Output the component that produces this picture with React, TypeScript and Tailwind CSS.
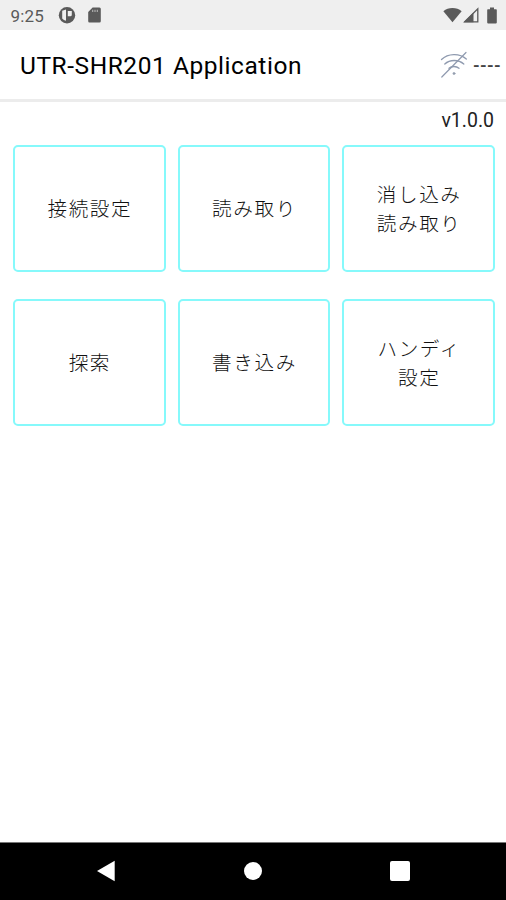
import React from 'react';

interface MenuItem {
  id: string;
  lines: string[];
}

const menuItems: MenuItem[] = [
  { id: 'connection', lines: ['接続設定'] },
  { id: 'read', lines: ['読み取り'] },
  { id: 'check-read', lines: ['消し込み', '読み取り'] },
  { id: 'search', lines: ['探索'] },
  { id: 'write', lines: ['書き込み'] },
  { id: 'handy', lines: ['ハンディ', '設定'] },
];

const StatusBar: React.FC = () => (
  <div className="flex h-[30px] shrink-0 items-center justify-between bg-[#efefef] pl-[10.5px] pr-[9px] text-[#5a5a5a]">
    <div className="flex items-center">
      <span className="w-[47px] pt-[2px] text-[17px] leading-none tracking-[0.2px]">9:25</span>
      <svg className="h-[18px] w-[18px]" viewBox="0 0 18 18">
        <circle cx="9" cy="9.3" r="8.2" fill="#5a5a5a" />
        <path d="M4.2 4.8L8 3.6v11.2a6 6 0 0 1-3.8-2.3z" fill="#efefef" />
        <path d="M9.8 5h4v3.8a1.5 1.5 0 0 1-1.5 1.5H9.8z" fill="#efefef" />
      </svg>
      <svg className="ml-[12px] h-[16px] w-[13px]" viewBox="0 0 13 16">
        <path
          d="M4.6.5h6.8A1.4 1.4 0 0 1 12.8 2v12a1.4 1.4 0 0 1-1.4 1.5H1.6A1.4 1.4 0 0 1 .2 14V5z"
          fill="#5a5a5a"
        />
        <path d="M4.7 2.8v2.2M7 2.8v2.2M9.3 2.8v2.2" stroke="#b4b4b4" strokeWidth="1.1" />
      </svg>
    </div>
    <div className="flex items-center">
      <svg className="h-[16px] w-[19px]" viewBox="0 0 20 16">
        <path d="M.4 4.1C3 1.8 6.3.7 10 .7s7 1.1 9.6 3.4L10 15.5z" fill="#5a5a5a" />
      </svg>
      <svg className="ml-[1px] h-[16px] w-[16px]" viewBox="0 0 16 16">
        <path d="M1.7 14.8L14.8 1.7v13.1z" fill="none" stroke="#5a5a5a" strokeWidth="1.3" />
        <path d="M.8 15.3L10.5 5.6v9.7z" fill="#5a5a5a" />
      </svg>
      <svg className="ml-[8px] h-[17px] w-[10px]" viewBox="0 0 10 17">
        <path d="M3 .5h4v1.8h2.1q.7 0 .7.7v12.6q0 .8-.7.8H.9q-.7 0-.7-.8V3q0-.7.7-.7H3z" fill="#5a5a5a" />
      </svg>
    </div>
  </div>
);

const DisconnectedIcon: React.FC = () => (
  <svg className="h-[28px] w-[28px]" viewBox="0 0 28 28" fill="none" stroke="#8f9aaf" strokeLinecap="round">
    <path d="M1.5 8.5C8 2.3 19.5 1.8 26.3 8" strokeWidth="1.3" />
    <path d="M4.8 13C9.8 8.3 18.5 8.3 23.8 13" strokeWidth="1.3" />
    <path d="M9 17.3C11.500 14.900 16.300 14.900 19 17.3" strokeWidth="1.3" />
    <path d="M1.8 26L26 1.5" strokeWidth="1.2" />
    <circle cx="14" cy="22.5" r="1.1" fill="#9aa1ae" strokeWidth="0.6" />
  </svg>
);

const MenuButton: React.FC<{ item: MenuItem }> = ({ item }) => (
  <button className="flex h-[127px] flex-col items-center justify-center rounded-[5px] border-2 border-[#86f9fb] bg-white pl-[1px] pt-[4px] text-[19.6px] font-light leading-[28.5px] tracking-[1.6px] text-[#111]">
    {item.lines.map((line) => (
      <span key={line}>{line}</span>
    ))}
  </button>
);

const NavigationBar: React.FC = () => (
  <nav className="flex h-[58px] shrink-0 items-center justify-between border-t border-[#777] bg-black px-[96px] pb-[1px]">
    <svg className="h-[22px] w-[20px]" viewBox="0 0 20 22">
      <path d="M1 11L18.7.7v20.6z" fill="#fff" />
    </svg>
    <span className="h-[18px] w-[18px] rounded-full bg-white" />
    <span className="h-[20px] w-[20px] rounded-[2px] bg-white" />
  </nav>
);

const App: React.FC = () => {
  return (
    <div className="flex h-[900px] w-[506px] flex-col overflow-hidden bg-white font-[Roboto,'Noto_Sans_CJK_JP',sans-serif]">
      <StatusBar />

      <header className="flex h-[72px] shrink-0 items-center justify-between border-b-[3px] border-[#ececec] pl-[20px] pr-[5px]">
        <h1 className="pt-[3px] text-[24.5px] font-[450] leading-none tracking-[0.55px] text-black">
          UTR-SHR201 Application
        </h1>
        <div className="flex items-center">
          <DisconnectedIcon />
          <span className="ml-[5px] pt-[1px] text-[17px] font-bold leading-none tracking-[0.3px] text-[#444]">----</span>
        </div>
      </header>

      <main className="flex-1">
        <p className="h-[43px] pr-[12px] pt-[9px] text-right text-[19.5px] leading-[20px] text-[#222]">v1.0.0</p>
        <div className="grid grid-cols-3 gap-x-[12px] gap-y-[27px] pl-[13px] pr-[11px]">
          {menuItems.map((item) => (
            <MenuButton key={item.id} item={item} />
          ))}
        </div>
      </main>

      <NavigationBar />
    </div>
  );
};

export default App;
